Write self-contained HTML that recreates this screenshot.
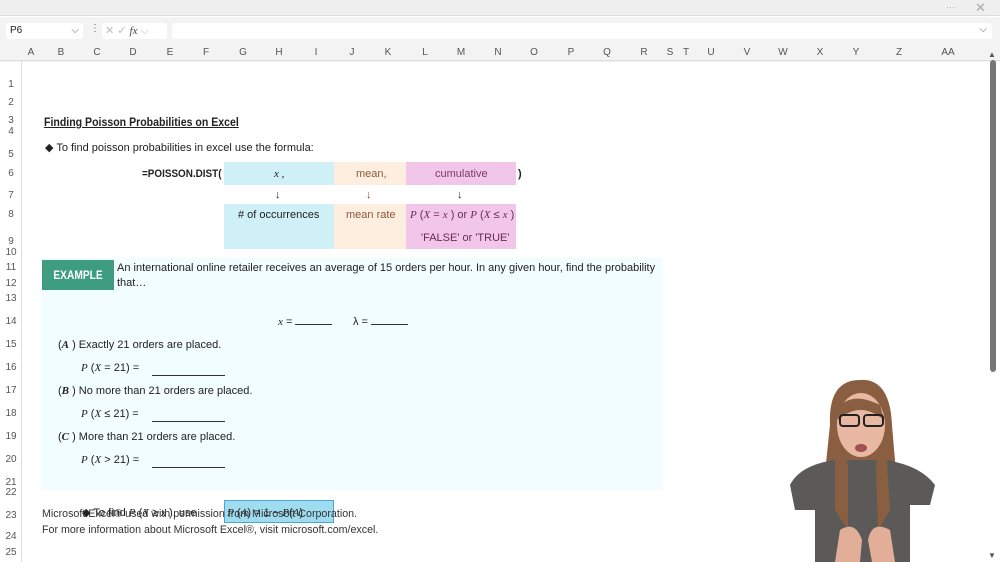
<!DOCTYPE html>
<html><head><meta charset="utf-8"><style>
*{margin:0;padding:0;box-sizing:border-box}
body{width:1000px;height:562px;overflow:hidden;background:#fff;font-family:"Liberation Sans",sans-serif;position:relative;color:#222}
.a{position:absolute;white-space:nowrap}
.rn{position:absolute;left:0;width:22px;text-align:center;font-size:10px;color:#555}
.cl{position:absolute;top:47px;font-size:10px;color:#555;transform:translateX(-50%)}
.s{font-family:"Liberation Serif",serif;font-style:italic}
.t{font-size:11px}
</style></head><body>
<div class="a" style="left:0;top:0;width:1000px;height:16px;background:#efefef;border-bottom:1px solid #ddd"></div>
<div class="a" style="left:946px;top:2px;font-size:9px;color:#aaa">···</div>
<div class="a" style="left:975px;top:0px;font-size:13px;color:#aaa">✕</div>
<div class="a" style="left:0;top:17px;width:1000px;height:45px;background:#f3f3f3"></div>
<div class="a" style="left:6px;top:23px;width:77px;height:16px;background:#fff;border-radius:3px;font-size:10px;padding:2px 4px">P6<span style="position:absolute;right:4px;color:#666">⌵</span></div>
<div class="a" style="left:90px;top:23px;font-size:10px;color:#666">⋮</div>
<div class="a" style="left:102px;top:23px;width:65px;height:16px;background:#fff;border-radius:3px;font-size:11px;color:#bbb;padding:1px 3px">✕ ✓ <span class="s" style="color:#444">fx</span> ⌵</div>
<div class="a" style="left:172px;top:23px;width:820px;height:16px;background:#fff;border-radius:3px"><span style="position:absolute;right:5px;top:1px;font-size:10px;color:#666">⌵</span></div>
<div class="a" style="left:0;top:60px;width:1000px;height:1px;background:#ddd"></div>
<div class="a" style="left:21px;top:60px;width:1px;height:502px;background:#ddd"></div>
<div class="cl" style="left:31px">A</div><div class="cl" style="left:61px">B</div><div class="cl" style="left:97px">C</div><div class="cl" style="left:133px">D</div><div class="cl" style="left:170px">E</div><div class="cl" style="left:206px">F</div><div class="cl" style="left:243px">G</div><div class="cl" style="left:279px">H</div><div class="cl" style="left:316px">I</div><div class="cl" style="left:352px">J</div><div class="cl" style="left:388px">K</div><div class="cl" style="left:425px">L</div><div class="cl" style="left:461px">M</div><div class="cl" style="left:498px">N</div><div class="cl" style="left:534px">O</div><div class="cl" style="left:571px">P</div><div class="cl" style="left:607px">Q</div><div class="cl" style="left:644px">R</div><div class="cl" style="left:670px">S</div><div class="cl" style="left:686px">T</div><div class="cl" style="left:711px">U</div><div class="cl" style="left:747px">V</div><div class="cl" style="left:783px">W</div><div class="cl" style="left:820px">X</div><div class="cl" style="left:856px">Y</div><div class="cl" style="left:899px">Z</div><div class="cl" style="left:948px">AA</div>
<div class="rn" style="top:79px">1</div><div class="rn" style="top:97px">2</div><div class="rn" style="top:115px">3</div><div class="rn" style="top:126px">4</div><div class="rn" style="top:149px">5</div><div class="rn" style="top:168px">6</div><div class="rn" style="top:190px">7</div><div class="rn" style="top:209px">8</div><div class="rn" style="top:236px">9</div><div class="rn" style="top:247px">10</div><div class="rn" style="top:262px">11</div><div class="rn" style="top:278px">12</div><div class="rn" style="top:293px">13</div><div class="rn" style="top:316px">14</div><div class="rn" style="top:339px">15</div><div class="rn" style="top:362px">16</div><div class="rn" style="top:385px">17</div><div class="rn" style="top:408px">18</div><div class="rn" style="top:431px">19</div><div class="rn" style="top:454px">20</div><div class="rn" style="top:477px">21</div><div class="rn" style="top:487px">22</div><div class="rn" style="top:510px">23</div><div class="rn" style="top:531px">24</div><div class="rn" style="top:547px">25</div>
<div class="a" style="left:988px;top:50px;font-size:8px;color:#555">▲</div>
<div class="a" style="left:990px;top:60px;width:6px;height:312px;background:#777;border-radius:3px"></div>
<div class="a" style="left:988px;top:551px;font-size:8px;color:#555">▼</div>
<div class="a" style="left:44px;top:115px;font-size:12px;font-weight:bold;text-decoration:underline;transform:scaleX(.88);transform-origin:left">Finding Poisson Probabilities on Excel</div>
<div class="a t" style="left:45px;top:141px">◆ To find poisson probabilities in excel use the formula:</div>
<div class="a t" style="left:142px;top:168px;font-weight:bold;transform:scaleX(.9);transform-origin:left">=POISSON.DIST(</div>
<div class="a" style="left:224px;top:162px;width:110px;height:23px;background:#cff0f6"></div>
<div class="a" style="left:334px;top:162px;width:72px;height:23px;background:#fdeee0"></div>
<div class="a" style="left:406px;top:162px;width:110px;height:23px;background:#f2c6e8"></div>
<div class="a t s" style="left:274px;top:168px">x ,</div>
<div class="a t" style="left:356px;top:168px;color:#8a5a3a">mean,</div>
<div class="a t" style="left:435px;top:168px;color:#7a3a6a">cumulative</div>
<div class="a t" style="left:518px;top:168px;font-weight:bold">)</div>
<div class="a t" style="left:275px;top:189px">↓</div><div class="a t" style="left:366px;top:189px;color:#8a3a2a">↓</div><div class="a t" style="left:457px;top:189px">↓</div>
<div class="a" style="left:224px;top:204px;width:110px;height:45px;background:#cff0f6"></div>
<div class="a" style="left:334px;top:204px;width:72px;height:45px;background:#fdeee0"></div>
<div class="a" style="left:406px;top:204px;width:110px;height:45px;background:#f2c6e8"></div>
<div class="a t" style="left:238px;top:209px">#&nbsp;of occurrences</div>
<div class="a t" style="left:346px;top:209px;color:#8a5a3a">mean rate</div>
<div class="a t" style="left:410px;top:209px;color:#6a2a5a"><span class="s">P</span> (<span class="s">X</span> = <span class="s">x</span> ) or <span class="s">P</span> (<span class="s">X</span> ≤ <span class="s">x</span> )</div>
<div class="a t" style="left:421px;top:232px;color:#6a2a5a">'FALSE' or 'TRUE'</div>
<div class="a" style="left:42px;top:258px;width:620px;height:232px;background:#f1fdfe"></div>
<div class="a" style="left:42px;top:260px;width:72px;height:30px;background:#3e9c80;color:#fff;font-weight:bold;font-size:12px;text-align:center;line-height:30px"><span style="display:inline-block;transform:scaleX(.85)">EXAMPLE</span></div>
<div class="a t" style="left:117px;top:262px">An international online retailer receives an average of 15 orders per hour. In any given hour, find the probability</div>
<div class="a t" style="left:117px;top:277px">that…</div>
<div class="a t" style="left:278px;top:316px"><span class="s">x</span> = <span style="display:inline-block;width:37px;border-bottom:1px solid #333"></span></div>
<div class="a t" style="left:353px;top:316px">λ = <span style="display:inline-block;width:37px;border-bottom:1px solid #333"></span></div>
<div class="a t" style="left:58px;top:339px">(<b class="s">A</b> ) Exactly 21 orders are placed.</div>
<div class="a t" style="left:81px;top:362px"><span class="s">P</span> (<span class="s">X</span> = 21) =</div>
<div class="a" style="left:152px;top:375px;width:73px;height:1px;background:#333"></div>
<div class="a t" style="left:58px;top:385px">(<b class="s">B</b> ) No more than 21 orders are placed.</div>
<div class="a t" style="left:81px;top:408px"><span class="s">P</span> (<span class="s">X</span> ≤ 21) =</div>
<div class="a" style="left:152px;top:421px;width:73px;height:1px;background:#333"></div>
<div class="a t" style="left:58px;top:431px">(<b class="s">C</b> ) More than 21 orders are placed.</div>
<div class="a t" style="left:81px;top:454px"><span class="s">P</span> (<span class="s">X</span> &gt; 21) =</div>
<div class="a" style="left:152px;top:467px;width:73px;height:1px;background:#333"></div>
<div class="a" style="left:224px;top:500px;width:110px;height:23px;background:#9fdcf0;border:1px solid #4aa8d0"></div>
<div class="a t" style="left:82px;top:506px">◆ To find <span class="s">P</span> (<span class="s">X</span> ≥ <span class="s">x</span> ), use &nbsp;&nbsp;&nbsp;&nbsp;&nbsp;&nbsp;&nbsp;&nbsp;&nbsp;<span class="s">P</span> (<span class="s">A</span>) = 1 − <span class="s">P</span>(<span class="s">A</span>)</div>
<div class="a t" style="left:42px;top:508px;color:#333;transform:scaleX(.97);transform-origin:left">Microsoft Excel® used with permission from Microsoft Corporation.</div>
<div class="a t" style="left:42px;top:524px;color:#333;transform:scaleX(.97);transform-origin:left">For more information about Microsoft Excel®, visit microsoft.com/excel.</div>
<svg class="a" style="left:780px;top:370px" width="175" height="192" viewBox="0 0 175 192">
<path d="M50 55 Q48 10 80 10 Q110 8 112 55 L120 150 L40 150 Z" fill="#8a5e40"/>
<path d="M10 115 Q20 95 55 90 L105 90 Q140 95 155 115 L150 135 L130 135 L130 192 L35 192 L35 140 L15 140 Z" fill="#5c5a58"/>
<path d="M55 60 L55 140 L68 160 L68 95 Z M105 60 L110 140 L98 160 L96 95 Z" fill="#8a5e40"/>
<ellipse cx="81" cy="55" rx="24" ry="32" fill="#e8b8a2"/>
<path d="M57 40 Q70 20 100 35 L104 50 Q80 30 58 50 Z" fill="#8a5e40"/>
<rect x="60" y="45" width="19" height="11" rx="3" fill="none" stroke="#222" stroke-width="2"/>
<rect x="84" y="45" width="19" height="11" rx="3" fill="none" stroke="#222" stroke-width="2"/>
<ellipse cx="81" cy="78" rx="6" ry="4" fill="#a05050"/>
<path d="M60 160 Q75 150 82 170 L80 192 L55 192 Z M110 160 Q92 150 88 170 L92 192 L115 192 Z" fill="#e2ae98"/>
</svg>
</body></html>
